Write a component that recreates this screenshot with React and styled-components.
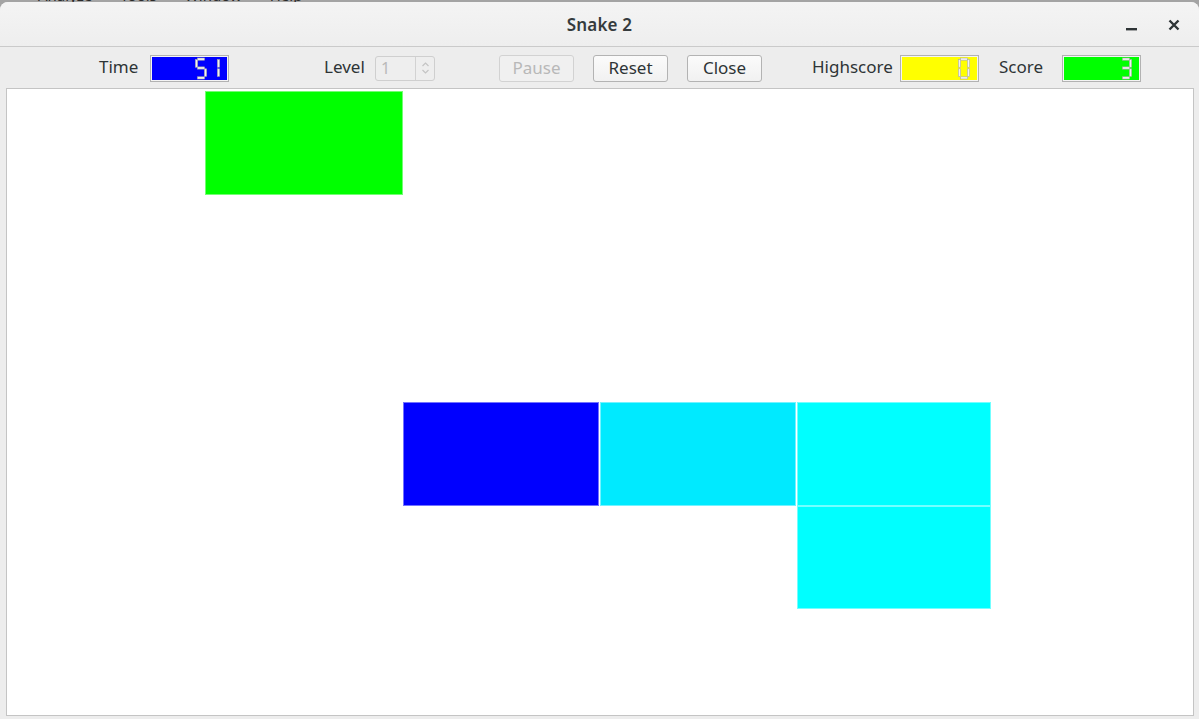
import React from "react";
import styled, { createGlobalStyle } from "styled-components";

const Global = createGlobalStyle`
  html, body { margin: 0; padding: 0; background: #a4a4a4; }
  body { font-family: "Noto Sans", "Open Sans", sans-serif; overflow: hidden; }
  * { box-sizing: border-box; }
`;

const Screen = styled.div`
  width: 1199px;
  height: 719px;
  display: flex;
  flex-direction: column;
  background: #a4a4a4;
  overflow: hidden;
`;

const BehindMenu = styled.div`
  height: 2px;
  overflow: hidden;
  padding-left: 38px;
  display: flex;
  gap: 28px;
  font-size: 15px;
  line-height: 15px;
  color: #2a2a2a;
  & > span { margin-top: -12px; }
`;

const Window = styled.div`
  flex: 1;
  display: flex;
  flex-direction: column;
  background: #ededed;
  border-radius: 8px 8px 0 0;
  overflow: hidden;
`;

const TitleBar = styled.div`
  height: 45px;
  flex: none;
  display: grid;
  grid-template-columns: 1fr auto 1fr;
  align-items: center;
  background: linear-gradient(#f4f4f4, #eeeeee);
  border-bottom: 1px solid #cacaca;
`;

const Title = styled.div`
  font-size: 17px;
  font-weight: 600;
  color: #353b3d;
  letter-spacing: 0.2px;
  padding-top: 1px;
`;

const TitleButtons = styled.div`
  justify-self: end;
  display: flex;
  align-items: center;
  gap: 20px;
  padding-right: 14px;
  padding-top: 2px;
`;

const TitleBtn = styled.span`
  width: 22px;
  height: 22px;
  display: flex;
  align-items: center;
  justify-content: center;
`;

const Toolbar = styled.div`
  height: 41px;
  flex: none;
  display: flex;
  align-items: center;
  padding-left: 99px;
  padding-top: 1px;
`;

const Label = styled.span`
  width: ${(p) => p.$w}px;
  margin-left: ${(p) => p.$ml || 0}px;
  flex: none;
  font-size: 17px;
  color: #2e3436;
  padding-bottom: 3px;
`;

const Lcd = styled.div`
  width: 79px;
  height: 27px;
  flex: none;
  border: 1px solid #b2b2b2;
  background: ${(p) => p.$bg};
  box-shadow: inset 0 0 0 1px #f4f4f4;
  display: flex;
  justify-content: flex-end;
  align-items: center;
  padding-right: 8px;
  gap: 1px;
`;

const Spin = styled.div`
  width: 60px;
  height: 25px;
  flex: none;
  display: flex;
  border: 1px solid #cfcfcf;
  border-radius: 3px;
  background: #eeeeee;
  color: #b9b9b9;
  font-size: 16px;
`;

const SpinText = styled.span`
  flex: 1;
  padding-left: 5px;
  line-height: 23px;
`;

const SpinArrows = styled.span`
  width: 19px;
  border-left: 1px solid #d2d2d2;
  display: flex;
  align-items: center;
  justify-content: center;
`;

const Button = styled.button`
  width: 75px;
  height: 27px;
  flex: none;
  margin-left: ${(p) => p.$ml}px;
  font-family: inherit;
  font-size: 17px;
  line-height: 1;
  padding: 0 0 2px;
  border-radius: 3px;
  border: 1px solid ${(p) => (p.disabled ? "#d2d2d2" : "#b3b3b3")};
  background: ${(p) => (p.disabled ? "#f0f0f0" : "linear-gradient(#fbfbfb, #f1f1f1)")};
  color: ${(p) => (p.disabled ? "#b8b8b8" : "#2e3436")};
`;

const Canvas = styled.div`
  margin: 0 5px 2px 6px;
  border: 1px solid #c4c4c4;
  background: #ffffff;
  padding: 2px 1px;
  display: grid;
  grid-template-columns: repeat(6, 197.33px);
  grid-template-rows: repeat(6, 103.67px);
`;

const Cell = styled.div`
  grid-column: ${(p) => p.$c + 1};
  grid-row: ${(p) => p.$r + 1};
  width: ${(p) => p.$w || 197}px;
  background: ${(p) => p.$color};
  box-shadow: inset 0 0 0 1px rgba(255, 255, 255, 0.45);
`;

const SEG = {
  a: [2.5, 1, 7, 2.2],
  b: [9.4, 2.6, 2.2, 7.6],
  c: [9.4, 11.8, 2.2, 7.6],
  d: [2.5, 19.8, 7, 2.2],
  e: [0.4, 11.8, 2.2, 7.6],
  f: [0.4, 2.6, 2.2, 7.6],
  g: [2.5, 9.9, 7, 2.2],
};
const DIGITS = {
  0: "abcdef",
  1: "bc",
  3: "abcdg",
  5: "acdfg",
};

function Digit({ d }) {
  return (
    <svg width="12" height="23" viewBox="0 0 12 23">
      {DIGITS[d].split("").map((s) => {
        const [x, y, w, h] = SEG[s];
        return (
          <rect key={s} x={x} y={y} width={w} height={h} fill="#f2f2f2" stroke="#a9a9a9" strokeWidth="0.6" />
        );
      })}
    </svg>
  );
}

function LcdNumber({ value, bg }) {
  return (
    <Lcd $bg={bg}>
      {String(value).split("").map((d, i) => (
        <Digit key={i} d={d} />
      ))}
    </Lcd>
  );
}

const cells = [
  { c: 1, r: 0, color: "#00ff00", w: 198 },
  { c: 2, r: 3, color: "#0000ff", w: 196 },
  { c: 3, r: 3, color: "#00eaff", w: 196 },
  { c: 4, r: 3, color: "#00ffff", w: 194 },
  { c: 4, r: 4, color: "#00ffff", w: 194 },
];

export default function App() {
  return (
    <Screen>
      <Global />
      <BehindMenu>
        <span>Analyze</span>
        <span>Tools</span>
        <span>Window</span>
        <span>Help</span>
      </BehindMenu>
      <Window>
        <TitleBar>
          <span />
          <Title>Snake 2</Title>
          <TitleButtons>
            <TitleBtn>
              <svg width="12" height="12" viewBox="0 0 12 12">
                <rect x="0" y="9" width="11" height="2.4" fill="#2e3436" />
              </svg>
            </TitleBtn>
            <TitleBtn>
              <svg width="12" height="12" viewBox="0 0 12 12">
                <path d="M1.5 1.5 L10.5 10.5 M10.5 1.5 L1.5 10.5" stroke="#2e3436" strokeWidth="2.4" />
              </svg>
            </TitleBtn>
          </TitleButtons>
        </TitleBar>
        <Toolbar>
          <Label $w={51}>Time</Label>
          <LcdNumber value="51" bg="#0000ff" />
          <Label $w={51} $ml={95}>Level</Label>
          <Spin>
            <SpinText>1</SpinText>
            <SpinArrows>
              <svg width="9" height="14" viewBox="0 0 9 14">
                <path d="M1.5 5 L4.5 2 L7.5 5 M1.5 9 L4.5 12 L7.5 9" stroke="#c4c4c4" strokeWidth="1.2" fill="none" />
              </svg>
            </SpinArrows>
          </Spin>
          <Button $ml={64} disabled>Pause</Button>
          <Button $ml={19}>Reset</Button>
          <Button $ml={19}>Close</Button>
          <Label $w={88} $ml={50}>Highscore</Label>
          <LcdNumber value="0" bg="#ffff00" />
          <Label $w={63} $ml={20}>Score</Label>
          <LcdNumber value="3" bg="#00ff00" />
        </Toolbar>
        <Canvas>
          {cells.map((c, i) => (
            <Cell key={i} $c={c.c} $r={c.r} $w={c.w} $color={c.color} />
          ))}
        </Canvas>
      </Window>
    </Screen>
  );
}
